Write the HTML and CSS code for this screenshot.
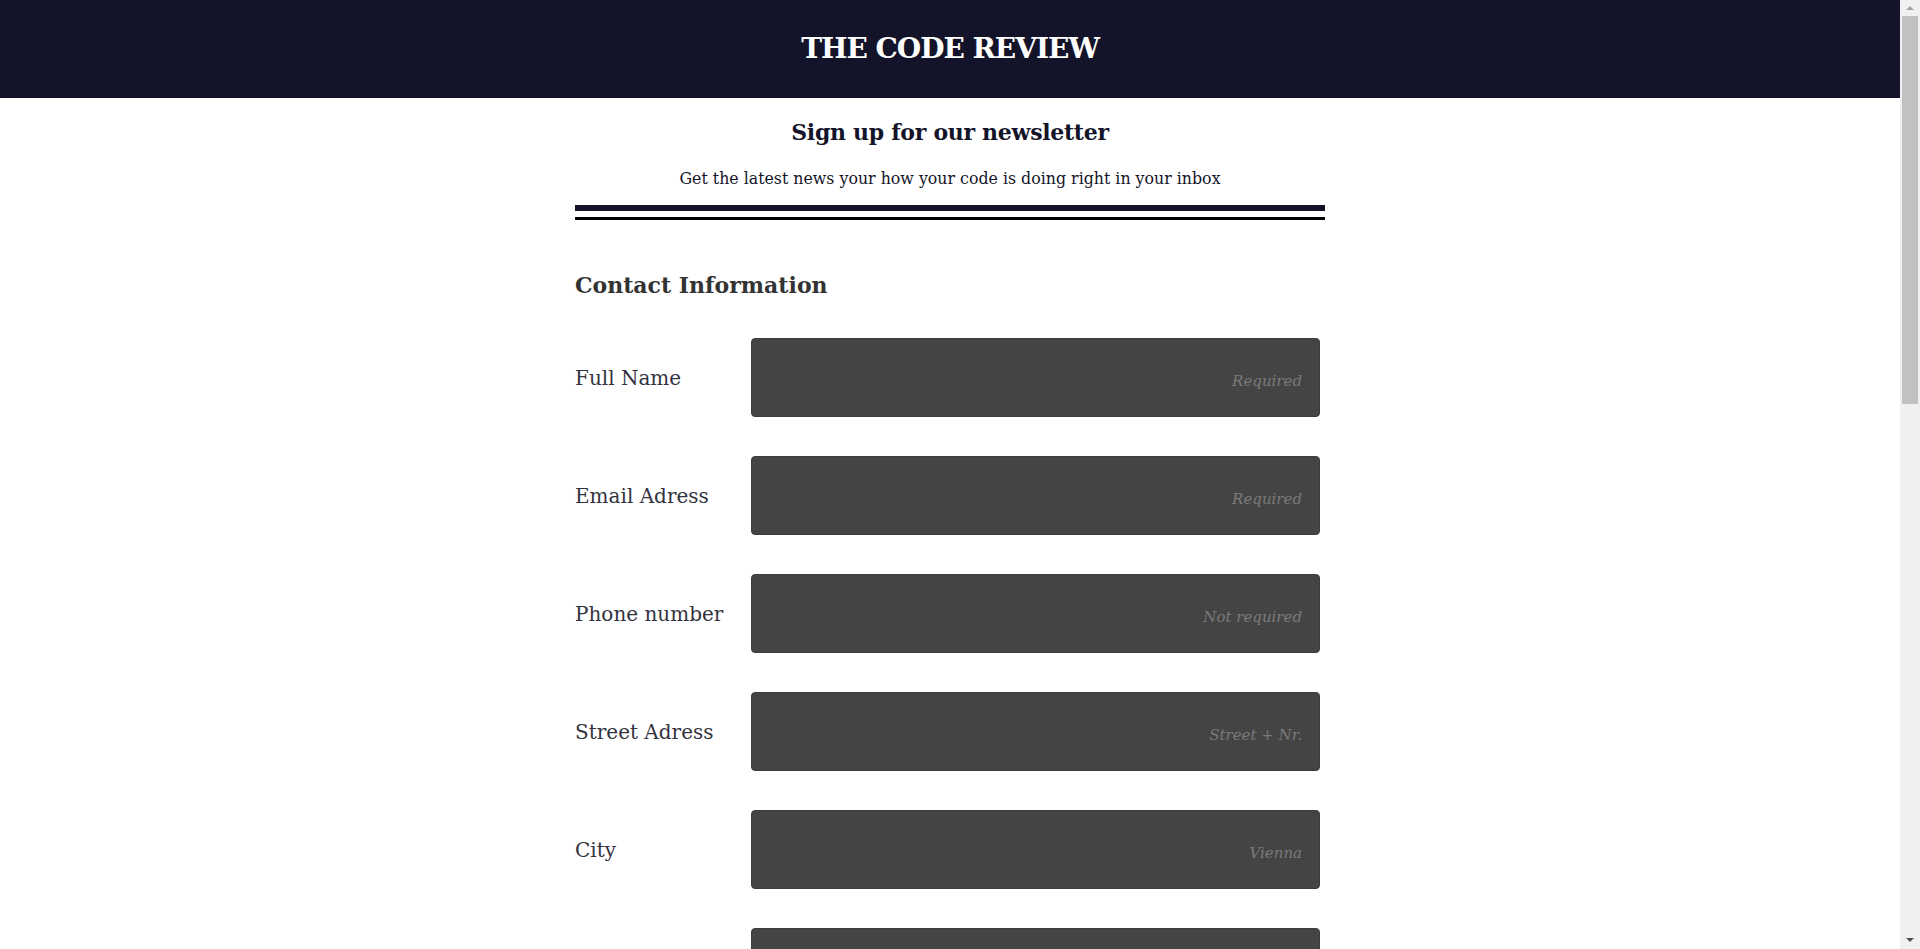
FILE: index.html
```html
<!DOCTYPE html>
<html lang="en">
<head>
<meta charset="utf-8">
<title>The Code Review</title>
<link rel="stylesheet" href="styles.css">
</head>
<body>
<header class="masthead">
  <h1 class="masthead-title">THE CODE REVIEW</h1>
</header>
<main class="page">
  <section class="intro">
    <h2 class="intro-title">Sign up for our newsletter</h2>
    <p class="intro-text">Get the latest news your how your code is doing right in your inbox</p>
    <div class="rule rule-thick"></div>
    <div class="rule rule-thin"></div>
  </section>
  <form class="signup">
    <h3 class="section-title">Contact Information</h3>
    <div class="field">
      <label class="field-label" for="name">Full Name</label>
      <input class="field-input" id="name" type="text" placeholder="Required">
    </div>
    <div class="field">
      <label class="field-label" for="email">Email Adress</label>
      <input class="field-input" id="email" type="email" placeholder="Required">
    </div>
    <div class="field">
      <label class="field-label" for="phone">Phone number</label>
      <input class="field-input" id="phone" type="tel" placeholder="Not required">
    </div>
    <div class="field">
      <label class="field-label" for="street">Street Adress</label>
      <input class="field-input" id="street" type="text" placeholder="Street + Nr.">
    </div>
    <div class="field">
      <label class="field-label" for="city">City</label>
      <input class="field-input" id="city" type="text" placeholder="Vienna">
    </div>
    <div class="field">
      <label class="field-label" for="zip">Zip Code</label>
      <input class="field-input" id="zip" type="text" placeholder="1010">
    </div>
    <div class="field">
      <label class="field-label" for="country">Country</label>
      <input class="field-input" id="country" type="text" placeholder="Austria">
    </div>
    <h3 class="section-title section-gap">Newsletter</h3>
    <div class="field">
      <label class="field-label" for="lang">Language</label>
      <input class="field-input" id="lang" type="text" placeholder="English">
    </div>
    <div class="field">
      <label class="field-label" for="topics">Topics</label>
      <input class="field-input" id="topics" type="text" placeholder="Not required">
    </div>
    <div class="field">
      <label class="field-label" for="freq">Frequency</label>
      <input class="field-input" id="freq" type="text" placeholder="Weekly">
    </div>
    <div class="actions">
      <button class="submit" type="submit">Subscribe</button>
    </div>
  </form>
</main>
<div class="scrollbar" aria-hidden="true">
  <span class="scroll-arrow scroll-up"></span>
  <span class="scroll-thumb"></span>
  <span class="scroll-arrow scroll-down"></span>
</div>
</body>
</html>
```
FILE: styles.css
```css
* { box-sizing: border-box; }
html, body { margin: 0; padding: 0; }
body {
  font-family: "DejaVu Serif", "Liberation Serif", serif;
  background: #ffffff;
  color: #333333;
  padding-right: 20px;
}
.masthead {
  height: 98px;
  background: #131429;
  display: flex;
  align-items: center;
  justify-content: center;
}
.masthead-title {
  margin: 0;
  color: #ffffff;
  font-size: 28px;
  line-height: 36px;
  font-weight: 700;
  letter-spacing: -1px;
}
.page {
  width: 750px;
  margin: 0 auto;
  padding-bottom: 200px;
}
.intro { text-align: center; }
.intro-title {
  margin: 19px 0 0;
  font-size: 22px;
  line-height: 30px;
  font-weight: 700;
  letter-spacing: -0.3px;
  color: #131429;
}
.intro-text {
  margin: 20px 0 0;
  font-size: 15.8px;
  line-height: 24px;
  color: #131429;
}
.rule-thick {
  margin-top: 14px;
  height: 6px;
  background: #131429;
}
.rule-thin {
  margin-top: 6px;
  height: 3px;
  background: #000000;
}
.signup {
  display: flex;
  flex-direction: column;
  gap: 39px;
}
.section-title {
  margin: 51px 0 0;
  font-size: 22px;
  line-height: 28px;
  font-weight: 700;
  color: #333333;
}
.section-gap { margin-top: 40px; }
.field {
  display: flex;
  align-items: center;
}
.field-label {
  width: 176px;
  flex: none;
  font-size: 20px;
  color: #333340;
}
.field-input {
  width: 569px;
  height: 79px;
  border: 1px solid #3d3d3d;
  border-radius: 4px;
  background: #444444;
  padding: 6px 17px 0 17px;
  font-family: "DejaVu Serif", serif;
  font-size: 15px;
  color: #eeeeee;
  text-align: right;
}
.field-input::placeholder {
  color: #7a7a7a;
  font-style: italic;
}
.actions {
  display: flex;
  justify-content: flex-end;
  padding-right: 5px;
}
.submit {
  font-family: "DejaVu Serif", serif;
  font-size: 18px;
  padding: 14px 40px;
  border: none;
  border-radius: 4px;
  background: #131429;
  color: #ffffff;
}
/* decorative window scrollbar overlay */
.scrollbar {
  position: fixed;
  top: 0;
  right: 0;
  width: 20px;
  height: 100vh;
  background: #f0f0f0;
  display: flex;
  flex-direction: column;
  align-items: center;
}
.scroll-arrow {
  width: 0;
  height: 0;
  border-left: 4px solid transparent;
  border-right: 4px solid transparent;
  flex: none;
}
.scroll-up {
  margin-top: 6px;
  border-bottom: 4px solid #a3a3a3;
}
.scroll-down {
  margin-top: auto;
  margin-bottom: 7px;
  border-top: 4px solid #505050;
}
.scroll-thumb {
  margin-top: 6px;
  width: 16px;
  height: 388px;
  background: #c1c1c1;
  flex: none;
}
```
